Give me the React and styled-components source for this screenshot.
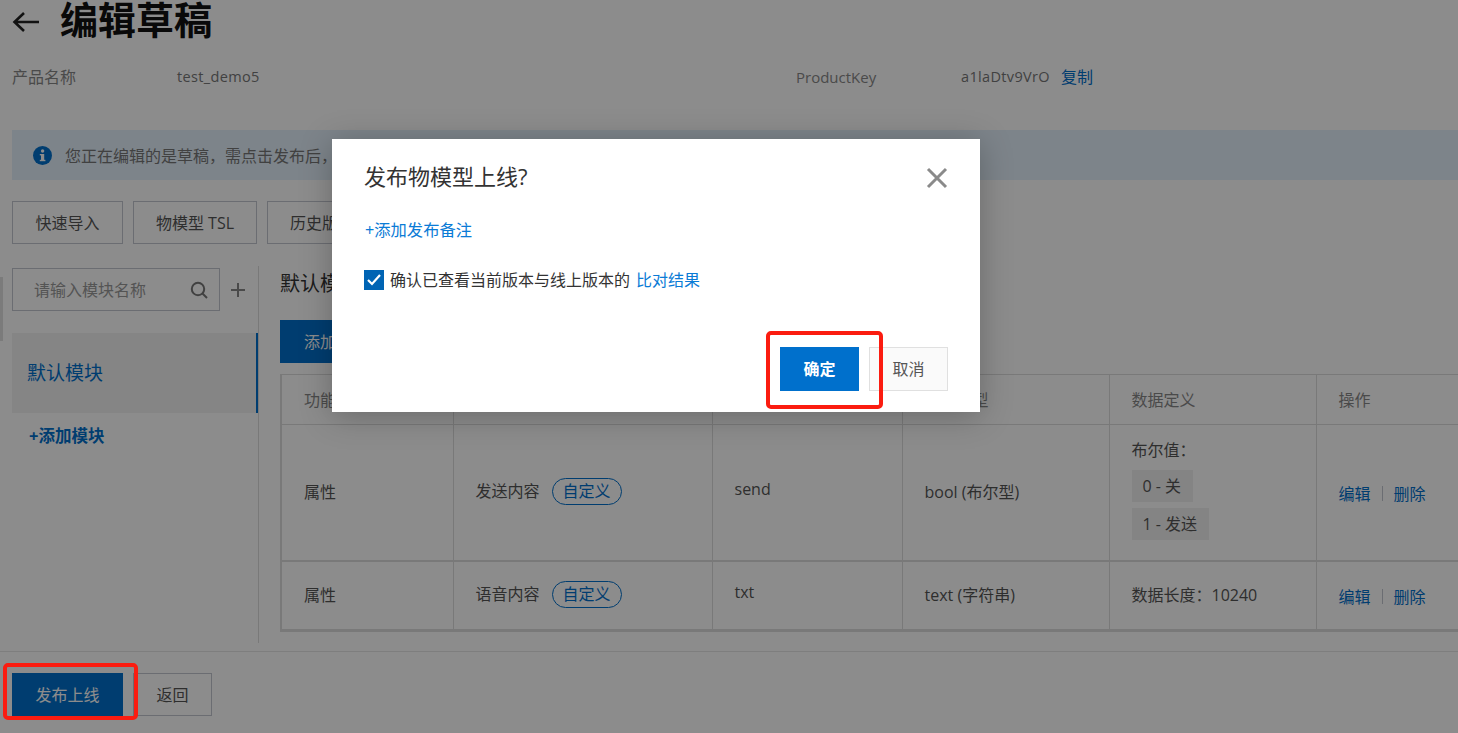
import React from "react";
import styled, { createGlobalStyle } from "styled-components";

const FONT = `"Open Sans", "Noto Sans CJK SC", sans-serif`;

const Global = createGlobalStyle`
  html, body { margin: 0; padding: 0; height: 733px; overflow: hidden; background: #fff; }
  body { font-family: ${FONT}; color: #555; font-size: 16px; }
  * { box-sizing: border-box; }
`;

const Page = styled.div`
  position: relative;
  width: 1458px;
  height: 733px;
  overflow: hidden;
  padding-left: 12px;
`;
const ScrollMark = styled.div`
  position: absolute; left: 0; top: 277px; width: 3px; height: 64px; background: #e0e0e0;
`;
const TitleRow = styled.header`
  display: flex; align-items: center; height: 40px; gap: 20px;
`;
const BackArrow = styled.svg`
  margin-top: 4px; flex: none;
`;
const Title = styled.h1`
  margin: 0 0 2px; font-size: 38px; line-height: 38px; font-weight: 700; color: #111;
`;
const MetaRow = styled.div`
  display: grid; grid-template-columns: 165px 619px 165px 1fr;
  margin-top: 25px; height: 24px; line-height: 24px; font-size: 14.5px;
`;
const MetaLabel = styled.span` color: #888; font-size: ${p => p.$latin ? "15px" : "16px"}; `;
const MetaValue = styled.span` color: #777; letter-spacing: .35px; display: flex; gap: 11px; `;
const Link = styled.a`
  color: ${p => p.$light ? "#0a7bd6" : "#0070cc"};
  font-weight: ${p => p.$bold ? 700 : 400};
  font-size: ${p => p.$size || "16px"};
  letter-spacing: 0;
  cursor: pointer;
`;
const Banner = styled.div`
  margin-top: 41px; height: 50px; background: #e3f0fb; display: flex; align-items: center;
  gap: 13px; padding-left: 21px; font-size: 16px; color: #777;
`;
const Toolbar = styled.div` display: flex; gap: 10px; margin-top: 21px; `;
const Btn = styled.button`
  height: ${p => p.$h || 43}px; width: ${p => p.$w}px; padding: 0 0 2px;
  border: 1px solid ${p => p.$soft ? "#e0e0e0" : "#c4c6cf"}; background: ${p => p.$bg || "#fff"}; color: #555;
  font-family: ${FONT}; font-size: 16px; flex: none;
`;
const PrimaryBtn = styled(Btn)`
  background: #0070cc; border-color: #0070cc; color: #fff;
`;
const Body = styled.div` display: flex; margin-top: 22px; height: 377px; `;
const Side = styled.aside`
  width: 247px; flex: none; border-right: 1px solid #ddd; padding-top: 2px;
`;
const SearchRow = styled.div` display: flex; align-items: center; gap: 10px; `;
const Search = styled.div`
  width: 208px; height: 43px; border: 1px solid #c4c6cf; display: flex; align-items: center;
  justify-content: space-between; padding: 0 11px 0 21px; font-size: 16px; color: #999;
`;
const SearchText = styled.span` margin-top: -1px; `;
const ModuleItem = styled.div`
  margin-top: 22px; height: 80px; width: 246px; background: #f2f2f2; border-right: 2px solid #0070cc;
  display: flex; align-items: center; padding: 0 0 3px 15px; color: #0070cc; font-size: 19px;
`;
const AddModule = styled.div` margin: 10px 0 0 17px; `;
const Main = styled.main` flex: 1; padding: 3px 0 0 21px; min-width: 0; `;
const Heading = styled.h2`
  margin: 0; font-size: 20px; line-height: 30px; font-weight: 400; color: #333;
`;
const AddBtn = styled(PrimaryBtn)` display: block; margin-top: 21px; text-align: left; padding-left: 23px; `;
const Table = styled.table`
  border-collapse: collapse; table-layout: fixed; width: 1177px; margin-top: 11px;
  border-left: 2px solid #ddd; border-top: 1px solid #ddd; border-bottom: 3px solid #ddd;
`;
const Th = styled.th`
  height: 50px; text-align: left; font-weight: 400; color: #888; padding: 0 0 2px 22px;
  border-right: 1px solid #ddd; border-bottom: 1px solid #ddd; font-size: 16px; background: #fff;
`;
const Row = styled.tr` height: ${p => p.$h}px; `;
const Td = styled.td`
  padding: 0 0 ${p => p.$lift ?? 2}px 22px; border-right: 1px solid #ddd; border-bottom: 2px solid #ddd;
  font-size: 16px; color: #555; vertical-align: middle;
`;
const Pill = styled.span`
  display: inline-block; margin-left: 12px; height: 27px; line-height: 24px; width: 70px; text-align: center;
  border: 1px solid #0070cc; border-radius: 14px; color: #0070cc; font-size: 16px;
`;
const EnumLabel = styled.div` margin-bottom: 9px; `;
const EnumTag = styled.div`
  width: fit-content; height: 32px; line-height: 32px; padding: 0 12px 0 11px; background: #f0f0f0; margin-top: 6px;
`;
const Actions = styled.div` display: flex; align-items: center; margin-top: 4px; `;
const Sep = styled.span` width: 1px; height: 15px; background: #c4c6cf; margin: 0 11px; `;
const Footer = styled.footer`
  margin: 8px 0 0 -12px; padding: 21px 0 0 12px; border-top: 1px solid #e6e6e6; display: flex; gap: 10px;
`;
const Overlay = styled.div`
  position: absolute; inset: 0; background: rgba(0,0,0,.45);
`;
const Modal = styled.div`
  position: absolute; left: 332px; top: 139px; width: 648px; height: 273px; background: #fff;
  box-shadow: 0 4px 30px rgba(0,0,0,.25); padding: 0 32px; display: flex; flex-direction: column;
`;
const ModalHead = styled.div`
  display: flex; justify-content: space-between; align-items: center; height: 76px; padding-top: 1px;
`;
const ModalTitle = styled.div` font-size: 22px; color: #333; margin-bottom: 6px; `;
const Close = styled.svg` width: 22px; height: 22px; stroke: #8a8a8a; stroke-width: 3; `;
const NoteLine = styled.div` padding: 2px 0 0 1px; `;
const CheckRow = styled.label`
  display: flex; align-items: center; gap: 6px; margin-top: 26px; font-size: 16px; color: #333; height: 24px;
`;
const Check = styled.span`
  width: 20px; height: 20px; background: #0064b4; display: flex; align-items: center; justify-content: center; margin-top: 1px;
`;
const ModalFoot = styled.div` margin-top: auto; margin-bottom: 21px; display: flex; justify-content: flex-end; gap: 10px; `;
const OkBtn = styled(PrimaryBtn)` font-weight: 700; `;
const Annot = styled.div`
  position: absolute; left: ${p => p.$l}px; top: ${p => p.$t}px; width: ${p => p.$w}px; height: ${p => p.$h}px;
  border: 4px solid #fb1c10; border-radius: 5px; pointer-events: none;
`;

const Cols = [172, 259, 190, 207, 207, 142];

export default function App() {
  return (
    <Page>
      <Global />
      <ScrollMark />
      <TitleRow>
        <BackArrow width="28" height="22" viewBox="0 0 28 22" fill="none" stroke="#222" strokeWidth="2.6">
          <path d="M27 11H2.5M12 2l-9.5 9 9.5 9" />
        </BackArrow>
        <Title>编辑草稿</Title>
      </TitleRow>
      <MetaRow>
        <MetaLabel>产品名称</MetaLabel>
        <MetaValue>test_demo5</MetaValue>
        <MetaLabel $latin>ProductKey</MetaLabel>
        <MetaValue>a1laDtv9VrO <Link>复制</Link></MetaValue>
      </MetaRow>
      <Banner>
        <svg width="19" height="19" viewBox="0 0 19 19">
          <circle cx="9.5" cy="9.5" r="9.5" fill="#0070cc" />
          <rect x="8" y="8" width="3.2" height="7" fill="#fff" />
          <rect x="6.8" y="8" width="3" height="1.4" fill="#fff" />
          <rect x="6.8" y="13.8" width="5.6" height="1.4" fill="#fff" />
          <circle cx="9.6" cy="5" r="1.7" fill="#fff" />
        </svg>
        您正在编辑的是草稿，需点击发布后，
      </Banner>
      <Toolbar>
        <Btn $w={111}>快速导入</Btn>
        <Btn $w={124}>物模型 TSL</Btn>
        <Btn $w={110}>历史版本</Btn>
      </Toolbar>
      <Body>
        <Side>
          <SearchRow>
            <Search>
              <SearchText>请输入模块名称</SearchText>
              <svg width="18" height="18" viewBox="0 0 18 18" fill="none" stroke="#777" strokeWidth="2">
                <circle cx="8" cy="8" r="6.2" />
                <path d="M12.5 12.5L17 17" />
              </svg>
            </Search>
            <svg width="16" height="16" viewBox="0 0 16 16" stroke="#888" strokeWidth="2">
              <path d="M8 1v14M1 8h14" />
            </svg>
          </SearchRow>
          <ModuleItem>默认模块</ModuleItem>
          <AddModule><Link $bold $size="16.5px">+添加模块</Link></AddModule>
        </Side>
        <Main>
          <Heading>默认模块</Heading>
          <AddBtn $w={120}>添加功能</AddBtn>
          <Table>
            <colgroup>
              {Cols.map((w, i) => <col key={i} width={w} />)}
            </colgroup>
            <thead>
              <tr>
                <Th>功能类型</Th><Th>功能名称</Th><Th>标识符</Th><Th>数据类型</Th><Th>数据定义</Th><Th>操作</Th>
              </tr>
            </thead>
            <tbody>
              <Row $h={136}>
                <Td>属性</Td>
                <Td>发送内容<Pill>自定义</Pill></Td>
                <Td $lift={6}>send</Td>
                <Td>bool (布尔型)</Td>
                <Td $lift={8}>
                  <EnumLabel>布尔值：</EnumLabel>
                  <EnumTag>0 - 关</EnumTag>
                  <EnumTag>1 - 发送</EnumTag>
                </Td>
                <Td><Actions><Link>编辑</Link><Sep /><Link>删除</Link></Actions></Td>
              </Row>
              <Row $h={70}>
                <Td>属性</Td>
                <Td>语音内容<Pill>自定义</Pill></Td>
                <Td $lift={6}>txt</Td>
                <Td>text (字符串)</Td>
                <Td>数据长度：10240</Td>
                <Td><Actions><Link>编辑</Link><Sep /><Link>删除</Link></Actions></Td>
              </Row>
            </tbody>
          </Table>
        </Main>
      </Body>
      <Footer>
        <PrimaryBtn $w={111}>发布上线</PrimaryBtn>
        <Btn $w={79}>返回</Btn>
      </Footer>
      <Overlay />
      <Annot $l={3} $t={663} $w={135} $h={57} />
      <Modal>
        <ModalHead>
          <ModalTitle>发布物模型上线?</ModalTitle>
          <Close viewBox="0 0 22 22"><path d="M2 2l18 18M20 2L2 20" /></Close>
        </ModalHead>
        <NoteLine><Link $light $size="16.3px">+添加发布备注</Link></NoteLine>
        <CheckRow>
          <Check>
            <svg width="14" height="12" viewBox="0 0 14 12" fill="none" stroke="#fff" strokeWidth="2.2">
              <path d="M1 6l4 4 8-9" />
            </svg>
          </Check>
          确认已查看当前版本与线上版本的 <Link $light>比对结果</Link>
        </CheckRow>
        <ModalFoot>
          <OkBtn $w={79} $h={44}>确定</OkBtn>
          <Btn $w={79} $h={44} $bg="#fafafa" $soft>取消</Btn>
        </ModalFoot>
      </Modal>
      <Annot $l={766} $t={331} $w={117} $h={78} />
    </Page>
  );
}
